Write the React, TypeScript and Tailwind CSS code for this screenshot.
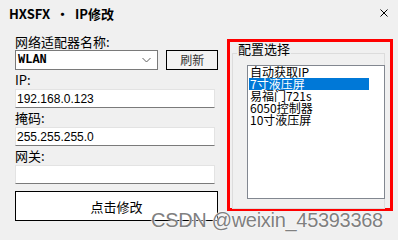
import React from "react";

const cjk = { fontFamily: '"Noto Sans CJK SC", "Liberation Sans", sans-serif' };
const lat = { fontFamily: '"Liberation Sans", "Noto Sans CJK SC", sans-serif' };

function Field({ value }: { value?: string }) {
  return (
    <div
      className="h-[19px] w-[200px] bg-white border border-[#e3e3e3] border-b-[#7a7a7a] flex items-center pl-[1px] text-[12px] text-black leading-none"
      style={lat}
    >
      {value}
    </div>
  );
}

function Label({ children }: { children: React.ReactNode }) {
  return (
    <div className="h-[19px] flex items-center text-[13px] leading-none text-black" style={cjk}>
      {children}
    </div>
  );
}

export default function App() {
  const items = ["自动获取IP", "7寸液压屏", "易福门721s", "6050控制器", "10寸液压屏"];
  return (
    <div className="relative w-[398px] h-[240px] bg-[#f0f0f0] overflow-hidden">
      {/* title bar */}
      <div className="h-[26px] flex items-center justify-between pl-[9px] pr-[9px]">
        <div className="text-[13px] font-bold text-black leading-none" style={cjk}>
          HXSFX &nbsp;·&nbsp; IP修改
        </div>
        <svg width="10" height="10" viewBox="0 0 10 10">
          <path d="M1.5 1.5 L8.5 8.5 M8.5 1.5 L1.5 8.5" stroke="#000" strokeWidth="1" fill="none" />
        </svg>
      </div>

      <div className="flex pl-[15px] pt-[6px]">
        {/* left column */}
        <div className="w-[203px] flex flex-col">
          <div className="h-[18px] flex items-center text-[13px] leading-none text-black" style={cjk}>
            网络适配器名称:
          </div>
          <div className="flex gap-[8px] h-[20px]">
            <div className="w-[144px] h-[20px] bg-white border border-[#7a7a7a] flex items-center justify-between pl-[2px] pr-[6px]">
              <span className="text-[12px] font-bold leading-none" style={{ fontFamily: '"Liberation Mono", monospace' }}>
                WLAN
              </span>
              <svg width="9" height="6" viewBox="0 0 9 6">
                <path d="M0.5 1 L4.5 5 L8.5 1" stroke="#606060" strokeWidth="1" fill="none" />
              </svg>
            </div>
            <div className="w-[52px] h-[20px] border border-black bg-[#f3f3f3] flex items-center justify-center text-[12px] text-[#333] leading-none" style={cjk}>
              刷新
            </div>
          </div>
          <Label>IP:</Label>
          <Field value="192.168.0.123" />
          <Label>掩码:</Label>
          <Field value="255.255.255.0" />
          <Label>网关:</Label>
          <Field />
          <div className="mt-[7px] w-[203px] h-[30px] border border-black bg-white flex items-center justify-center text-[13px] text-black leading-none" style={cjk}>
            点击修改
          </div>
        </div>

        {/* right red box */}
        <div className="ml-[9px] mt-[7px] w-[166px] h-[172px] border-[3px] border-[#ff0000] relative">
          <div className="absolute left-[2px] top-[11px] w-[153px] h-[156px] border border-[#dcdcdc]" />
          <div className="absolute left-[7px] top-[0px] px-[1px] bg-[#f0f0f0] text-[13px] leading-[14px] text-black" style={cjk}>
            配置选择
          </div>
          <div className="absolute left-[17px] top-[23px] w-[138px] h-[134px] bg-white border border-[#828790]">
            <div className="pl-[1px]">
              {items.map((t, i) => (
                <div
                  key={t}
                  className={
                    "h-[12px] w-[120px] text-[12px] leading-[12px] whitespace-nowrap pl-[1px] " +
                    (i === 1 ? "bg-[#0078d7] text-white" : "text-black")
                  }
                  style={cjk}
                >
                  {t}
                </div>
              ))}
            </div>
          </div>
        </div>
      </div>

      {/* watermark */}
      <div
        className="absolute left-[151px] top-[210px] text-[20px] leading-none tracking-[-0.3px] text-[#808080] whitespace-nowrap"
        style={{ fontFamily: '"Liberation Sans", sans-serif', textShadow: "0 0 1px #fff, 0 0 1px #fff, 0 0 2px #fff" }}
      >
        CSDN @weixin_45393368
      </div>
    </div>
  );
}
